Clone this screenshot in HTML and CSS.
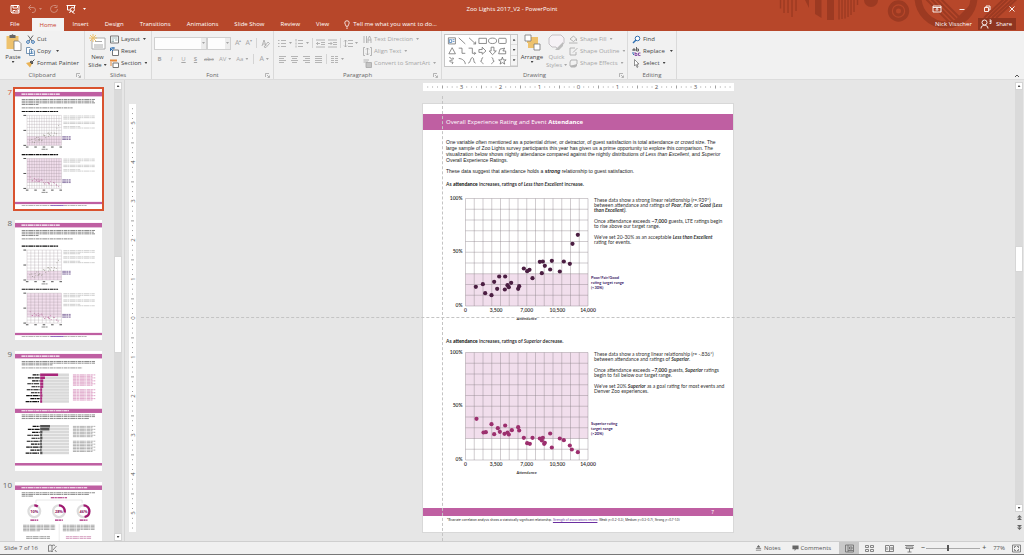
FILE: index.html
```html
<!DOCTYPE html>
<html lang="en">
<head>
<meta charset="utf-8">
<title>Zoo Lights 2017_V2 - PowerPoint</title>
<link rel="stylesheet" href="styles.css">
</head>
<body>
<header class="top">
  <svg class="pattern" viewBox="0 0 300 31" aria-hidden="true">
    <g stroke="#9c3a22" stroke-width="1.4" fill="none">
      <path d="M56.500 0V8.500M60 0V13M64 0V13M68 0V17M72 0V11"/>
      <path d="M115 0V19.500M118 0V19M121 0V18.500M124 0V17M127 0V15M130 0V12M133.500 0V5"/>
      <circle cx="174.500" cy="11" r="8.700" stroke-width="4"/><circle cx="174.500" cy="11" r="4" stroke-width="3"/>
      <circle cx="222" cy="-3" r="28" stroke-width="7"/>
      <path d="M199 -4L226 23M204 -4L229 21M209 -4L232 19M214 -4L235 17" stroke-width="2"/>
      <path d="M229 24L247 6" stroke-width="3"/>
      <path d="M260 18L281 -2M264 18L285 -2M268 18L290 -2M272 18L296 -4" stroke-width="2"/>
    </g>
    <g fill="#9c3a22"><path d="M81 0H85V8ZM91 0H97.500V18L91 14ZM103 0H110V20H103Z"/><circle cx="147" cy="0" r="7"/></g>
  </svg>
  <div class="titlebar">
    <div class="qat">
      <button aria-label="Save"><svg viewBox="0 0 10 10" class="i10"><path d="M1 1.500H9V9H2L1 8ZM3 1.500V4H7.500V1.500M3 9V6.500H5" fill="none" stroke="#fff"/><path d="M5 7H9M9 7L7.500 5.500" stroke="#fff"/></svg></button>
      <button class="dim" aria-label="Undo"><svg viewBox="0 0 10 10" class="i10"><path d="M4 1L1.500 3.500L4 6M1.500 3.500H6A2.500 2.500 0 0 1 6 8.500H5" fill="none" stroke="currentColor"/></svg><i class="caret"></i></button>
      <button class="dim" aria-label="Redo"><svg viewBox="0 0 10 10" class="i10"><path d="M7 1.500H4.500A3.500 3.500 0 1 0 8.500 5M5.500 3.500H8V1" fill="none" stroke="currentColor"/></svg></button>
      <button aria-label="Start from beginning"><svg viewBox="0 0 10 10" class="i10"><path d="M.5 1.500H9.500M1.500 2V6H4M8.500 2V4M3.500 9L5 6.500" fill="none" stroke="#fff"/><circle cx="6.500" cy="5.500" r="2" fill="none" stroke="#fff"/><path d="M6 8L8.500 9.500" stroke="#fff"/></svg></button>
      <button aria-label="Customize toolbar"><i class="caret"></i></button>
    </div>
    <div class="title">Zoo Lights 2017_V2 - PowerPoint</div>
    <div class="winbtns">
      <button aria-label="Ribbon display"><svg viewBox="0 0 10 8" class="w"><path d="M1 1H9V7H1ZM1 2.500H9M5 6V3.500M3.500 4.800L5 3.500L6.500 4.800" /></svg></button>
      <button aria-label="Minimize"><svg viewBox="0 0 10 8" class="w"><path d="M2.500 4.500H7.500"/></svg></button>
      <button aria-label="Restore"><svg viewBox="0 0 10 8" class="w"><path d="M2.500 2.500H6.500V6.500H2.500ZM4 2V1H8V5H7"/></svg></button>
      <button aria-label="Close"><svg viewBox="0 0 10 8" class="w"><path d="M2.500 1.500L7.500 6.500M7.500 1.500L2.500 6.500"/></svg></button>
    </div>
  </div>
  <nav class="tabs">
    <button class="file">File</button><button class="on">Home</button><button>Insert</button><button>Design</button><button>Transitions</button><button>Animations</button><button>Slide Show</button><button>Review</button><button>View</button>
    <button class="tell"><svg viewBox="0 0 8 10" class="bulb"><path d="M3 7C3 5.500 1.500 5 1.500 3.300A2.500 2.500 0 0 1 6.500 3.300C6.500 5 5 5.500 5 7ZM3 9H5" fill="none" stroke="#fff" stroke-width=".9"/></svg>Tell me what you want to do...</button>
    <span class="user">Nick Visscher</span>
    <button class="share"><svg viewBox="0 0 12 10" class="person"><circle cx="4.500" cy="3.500" r="2.500"/><path d="M1 9.500C1 7 3 6.300 4.500 6.300S8 7 8 9.500M9.500 1H11V4.500H9.500M9.500 2.700H11"/></svg>Share</button>
  </nav>
</header>

<section class="ribbon" aria-label="Home">
  <div class="group clip">
    <div class="body">
      <button class="big"><svg viewBox="0 0 16 17" class="bigi"><path d="M1 2H13V15H1Z" fill="#eec26d"/><path d="M4 1H6L7 0L8 1H10V4H4Z" fill="#666"/><path d="M8.500 7H13L15.500 9.500V16.500H8.500Z" fill="#fff" stroke="#777" stroke-width=".8"/></svg>Paste<i class="caret"></i></button>
      <div class="stack">
        <button><svg viewBox="0 0 9 9" class="i"><path d="M2 .5L6 6M7 .5L3 6" stroke="#666"/><g fill="none" stroke="#3e78b5"><circle cx="2" cy="7" r="1.400"/><circle cx="7" cy="7" r="1.400"/></g></svg>Cut</button>
        <button><svg viewBox="0 0 9 9" class="i"><path d="M.5.5H4L5.500 2V6.500H.5ZM3.500 2.500H7L8.500 4V8.500H3.500Z" fill="#fff" stroke="#557da5" stroke-width=".8"/><path d="M4.500 5H7.500M4.500 6.500H7.500" stroke="#3e78b5" stroke-width=".7"/></svg>Copy <i class="caret far"></i></button>
        <button><svg viewBox="0 0 9 9" class="i"><path d="M0 4L4 3L6 5L4 8.500Z" fill="#eab356"/><path d="M4 3L6 5L7 4L5.500 2ZM6 3L8.500.5" stroke="#555" fill="#666"/></svg>Format Painter</button>
      </div>
    </div>
    <div class="name">Clipboard<svg class="launch" viewBox="0 0 5 5"><path d="M.5 4V.5H4M2 2L4 4M4.500 2.500V4.500H2.500"/></svg></div>
  </div>
  <div class="group slides">
    <div class="body">
      <button class="big"><svg viewBox="0 0 17 17" class="bigi"><path d="M3 4H16V15H3Z" fill="#fff" stroke="#999" stroke-width=".8"/><path d="M6 7.500H13M5 11H14M5 13H14" stroke="#aaa"/><path d="M4 0V8M0 4H8M1 1L7 7M7 1L1 7" stroke="#eec26d"/></svg>New<span>Slide<i class="caret in"></i></span></button>
      <div class="stack">
        <button><svg viewBox="0 0 9 9" class="i"><path d="M.5 1H8.500V8H.5Z" fill="#fff" stroke="#777"/><path d="M1.500 3H7.500M1.500 5H4M5 5H7.500M1.500 6.500H4" stroke="#799" stroke-width=".7"/></svg>Layout<i class="caret in"></i></button>
        <button><svg viewBox="0 0 9 9" class="i"><path d="M2.500 3H8.500V8.500H2.500Z" fill="#fff" stroke="#777"/><path d="M.5 4V1H5M3 0V2.500M.5 1.500L3 4" fill="none" stroke="#2f6fb0"/></svg>Reset</button>
        <button><svg viewBox="0 0 9 9" class="i"><path d="M0 1.500H7" stroke="#e78a3c" stroke-width="2"/><path d="M3 4H8.500V8.500H3Z" fill="#fff" stroke="#777"/><path d="M1 3V7" stroke="#e78a3c"/></svg>Section<i class="caret in"></i></button>
      </div>
    </div>
    <div class="name">Slides</div>
  </div>
  <div class="group font off">
    <div class="rows">
      <div class="row">
        <span class="combo wide"><input aria-label="Font" disabled><i class="caret"></i></span><span class="combo"><input aria-label="Font size" disabled><i class="caret"></i></span>
        <button class="g">A<sup>▴</sup></button><button class="g">A<sup>▾</sup></button><span class="sep"></span><button class="g" aria-label="Clear formatting"><svg viewBox="0 0 9 9" class="i"><path d="M1 7L3 1L5 7M2 5H4M3 8L7 3L8.500 4.500L5 8.500Z" class="ln"/></svg></button>
      </div>
      <div class="row fmt">
        <button><b>B</b></button><button><em>I</em></button><button><u>U</u></button><button><b><u>S</u></b></button><button><s>abc</s></button><button>AV<i class="caret"></i></button><button>Aa<i class="caret"></i></button><span class="sep"></span><button class="g">A<i class="caret"></i></button>
      </div>
    </div>
    <div class="name">Font<svg class="launch" viewBox="0 0 5 5"><path d="M.5 4V.5H4M2 2L4 4M4.500 2.500V4.500H2.500"/></svg></div>
  </div>
  <div class="group para off">
    <div class="body">
      <div class="rows">
        <div class="row">
          <button aria-label="Bullets"><svg viewBox="0 0 9 9" class="i"><path d="M0 1.500H1.500M3 1.500H8M0 4.500H1.500M3 4.500H8M0 7.500H1.500M3 7.500H8" class="ln"/></svg><i class="caret"></i></button>
          <button aria-label="Numbering"><svg viewBox="0 0 9 9" class="i"><path d="M1 0V2.500M3 1.500H8M1 3.500V5.500M3 4.500H8M1 6.500V8.500M3 7.500H8" class="ln"/></svg><i class="caret"></i></button><span class="sep"></span>
          <button aria-label="Decrease indent"><svg viewBox="0 0 9 9" class="i"><path d="M0 1H9M5 3.500H9M5 5.500H9M0 8H9M4 4.500H.5M2 3L.5 4.500L2 6" class="ln"/></svg></button>
          <button aria-label="Increase indent"><svg viewBox="0 0 9 9" class="i"><path d="M0 1H9M5 3.500H9M5 5.500H9M0 8H9M0 4.500H4M2.500 3L4 4.500L2.500 6" class="ln"/></svg></button><span class="sep"></span>
          <button aria-label="Line spacing"><svg viewBox="0 0 9 9" class="i"><path d="M4 1.500H9M4 4.500H9M4 7.500H9M1.500 1V8M0 2.500L1.500 1L3 2.500M0 6.500L1.500 8L3 6.500" class="ln"/></svg><i class="caret"></i></button>
        </div>
        <div class="row al">
          <button aria-label="Align left"><svg viewBox="0 0 9 9" class="i"><path d="M1 1.500H8M1 3.500H6M1 5.500H8M1 7.500H6" class="ln"/></svg></button>
          <button aria-label="Center"><svg viewBox="0 0 9 9" class="i"><path d="M1 1.500H8M2 3.500H7M1 5.500H8M2 7.500H7" class="ln"/></svg></button>
          <button aria-label="Align right"><svg viewBox="0 0 9 9" class="i"><path d="M1 1.500H8M3 3.500H8M1 5.500H8M3 7.500H8" class="ln"/></svg></button>
          <button aria-label="Justify"><svg viewBox="0 0 9 9" class="i"><path d="M1 1.500H8M1 3.500H8M1 5.500H8M1 7.500H8" class="ln"/></svg></button><span class="sep"></span>
          <button aria-label="Columns"><svg viewBox="0 0 9 9" class="i"><path d="M1 1.500H4M5 1.500H8M1 3.500H4M5 3.500H8M1 5.500H4M5 5.500H8M1 7.500H4M5 7.500H8" class="ln"/></svg><i class="caret"></i></button>
        </div>
      </div>
      <div class="stack">
        <button><svg viewBox="0 0 9 9" class="i"><path d="M1 1V8M3.500 1V8M5 8V4L6.500 1L8 4V8M5 5H8" class="ln"/></svg>Text Direction<i class="caret in"></i></button>
        <button><svg viewBox="0 0 9 9" class="i"><path d="M2 .5H.5V8.500H2M7 .5H8.500V8.500H7M4.500 1V8M3 2.500L4.500 1L6 2.500M3 6.500L4.500 8L6 6.500" class="ln"/></svg>Align Text<i class="caret in"></i></button>
        <button><svg viewBox="0 0 9 9" class="i"><path d="M.5 1H6M.5 3H5" class="ln"/><path d="M3 3.500H8.500V8.500H3Z" fill="#c4c4c4"/><path d="M3 3.500H8.500V8.500H3Z" class="ln"/></svg>Convert to SmartArt<i class="caret in"></i></button>
      </div>
    </div>
    <div class="name">Paragraph<svg class="launch" viewBox="0 0 5 5"><path d="M.5 4V.5H4M2 2L4 4M4.500 2.500V4.500H2.500"/></svg></div>
  </div>
  <div class="group draw">
    <div class="body">
      <div class="gallery">
        <svg viewBox="0 0 66 33" class="shapes" aria-label="Shapes"><g fill="none" stroke="#6a6a6a" stroke-width=".8">
          <path d="M2 3H9.500V9.500H2Z"/><path d="M3 5H5.500V8H3ZM6.500 5H8.500M6.500 7H8.500" stroke="#3e78b5"/><path d="M13 3L20 9.500M24 3L31 9.500M31 7V9.500H28.500M34.500 3.500H42.500V9H34.500Z"/><ellipse cx="49" cy="6.200" rx="4.300" ry="2.900"/><rect x="55.500" y="3.500" width="8" height="5.500" rx="1"/>
          <path d="M2.500 20L6 13.500L9.500 20ZM13 14H16.500V19.500H20M23.500 14H27.500V19.500H31M29.500 18L31 19.500L29.500 21M34.500 15.500H38V13L42 17L38 20.500V18.500H34.500ZM47.500 13H50.500V17H53L49 21L45.500 17H47.500ZM62 14L57 15L55.500 20H63V17H60Z"/>
          <path d="M3 24C5 23 4 27 6 25S8 27 5 27S3 29 7 29L6 31M13 25C17 25 20 28 20 31M23 30C26 30 25 24 27.500 24S28 30 31 30M39 24Q37.500 24 37.500 26T36.500 27.500T37.500 29T39 31M48 24Q49.500 24 49.500 26T50.500 27.500T49.500 29T48 31M59.500 23.500L60.500 26.500H63.500L61.200 28.300L62 31L59.500 29.400L57 31L57.800 28.300L55.500 26.500H58.500Z"/></g></svg>
        <div class="spin"><button aria-label="Row up"><i class="caret up"></i></button><button aria-label="Row down"><i class="caret"></i></button><button aria-label="More shapes"><i class="caret"></i></button></div>
      </div>
      <button class="big arr"><svg viewBox="0 0 17 17" class="bigi"><path d="M3 3H14V14H3Z" fill="#eec26d"/><path d="M1 1H7V7H1ZM10 10H16V16H10Z" fill="#fff" stroke="#777" stroke-width=".8"/><path d="M8 1H14V7H8ZM2 9H8V15H2Z" fill="#f1f1f1"/><path d="M8 3H14V8H8ZM4 8H9V14H4Z" fill="#eec26d"/></svg>Arrange<i class="caret"></i></button>
      <button class="big off"><svg viewBox="0 0 17 17" class="bigi"><path d="M4 1H13L16 4V9L10 16L8 13H4L1 10V4Z" fill="#f6f2f6" stroke="#c4c0c4"/><path d="M7 16L15 8V12L11 16Z" fill="#bdbdbd"/></svg>Quick<span>Styles<i class="caret in"></i></span></button>
      <div class="stack off">
        <button><svg viewBox="0 0 9 9" class="i"><path d="M1 4L4.500 1L7.500 4L4.500 6.500ZM7.500 4V6M0 8H8.500" class="ln"/></svg>Shape Fill<i class="caret in"></i></button>
        <button><svg viewBox="0 0 9 9" class="i"><path d="M6 1H1V8H7V5M4 5.500L8.500 1" class="ln"/></svg>Shape Outline<i class="caret in"></i></button>
        <button><svg viewBox="0 0 9 9" class="i"><path d="M2 1H8V5L6 7H1V3Z" class="ln"/><path d="M1 7L8 5V7L6 8.500H2Z" fill="#b4b4b4"/></svg>Shape Effects<i class="caret in"></i></button>
      </div>
    </div>
    <div class="name">Drawing<svg class="launch" viewBox="0 0 5 5"><path d="M.5 4V.5H4M2 2L4 4M4.500 2.500V4.500H2.500"/></svg></div>
  </div>
  <div class="group edit">
    <div class="body"><div class="stack">
      <button><svg viewBox="0 0 9 9" class="i"><circle cx="5.500" cy="3.500" r="2.300" fill="#fff" stroke="#2f6fb0"/><path d="M4 5L1 8" stroke="#2f6fb0" stroke-width="1.500"/></svg>Find</button>
      <button><svg viewBox="0 0 9 9" class="i"><path d="M1 4V2H3V4M1 3H3M4.500 0V4H6.500V2H4.500" fill="none" stroke="#555" stroke-width=".9"/><path d="M3 5V8.500H5V6.500H3M8.500 6H6.500V8.500H8.500" fill="none" stroke="#8b55a8"/><path d="M1 5V7L2 8" fill="none" stroke="#2f6fb0"/></svg>Replace <i class="caret far"></i></button>
      <button><svg viewBox="0 0 9 9" class="i"><path d="M2.500.5V7L4 5.500L5 8.500L6 8L5 5H7Z" fill="#fff" stroke="#777" stroke-width=".8"/></svg>Select<i class="caret in"></i></button>
    </div></div>
    <div class="name">Editing</div>
  </div>
  <button class="collapse" aria-label="Collapse ribbon"><svg viewBox="0 0 6 4" class="chev"><path d="M1 3L3 1L5 3" fill="none" stroke="#555"/></svg></button>
</section>

<main class="work">
  <aside class="thumbs" id="thumbs" aria-label="Slides"></aside>
  <div class="scroll left"><button aria-label="Scroll up"><i class="caret up"></i></button><div class="track"><div class="thumb"></div></div><button aria-label="Scroll down"><i class="caret"></i></button></div>
  <div class="vrule"><svg id="vrule" viewBox="0 0 7 428" aria-hidden="true"></svg></div>
  <div class="canvas">
    <div class="hrule"><svg id="hrule" viewBox="0 0 311 8" aria-hidden="true"></svg></div>
    <article class="slide">
      <h1>Overall Experience Rating and Event <b>Attendance</b></h1>
      <p class="lead">One variable often mentioned as a potential driver, or detractor, of guest satisfaction is total attendance or crowd size. The<br>large sample of Zoo Lights survey participants this year has given us a prime opportunity to explore this comparison. The<br>visualization below shows nightly attendance compared against the nightly distributions of <em>Less than Excellent</em>, and <em>Superior</em><br>Overall Experience Ratings.</p>
      <p class="lead second">These data suggest that attendance holds a <b><em>strong</em></b> relationship to guest satisfaction.</p>
      <h2>As <b>attendance</b> increases, ratings of <em>Less than Excellent</em> increase.</h2>
      <div class="figure">
        <svg class="chart" id="chart1" viewBox="0 0 144 130"></svg>
        <div class="notes">
          <p>These data show a strong linear relationship (<em>r</em>=.939*)<br>between attendance and ratings of <b><em>Poor</em></b>, <b><em>Fair</em></b>, or <b><em>Good (Less<br>than Excellent)</em></b>.</p>
          <p>Once attendance exceeds <b>~7,000</b> guests, LTE ratings begin<br>to rise above our target range.</p>
          <p>We've set 20-30% as an acceptable <b><em>Less than Excellent</em></b><br>rating for events.</p>
          <strong class="target">Poor/Fair/Good<br>rating target range<br>(&lt;30%)</strong>
        </div>
      </div>
      <h2 class="next">As <b>attendance</b> increases, ratings of <em>Superior</em> decrease.</h2>
      <div class="figure lower">
        <svg class="chart" id="chart2" viewBox="0 0 144 130"></svg>
        <div class="notes">
          <p>These data show a strong linear relationship (<em>r</em>= -.836*)<br>between attendance and ratings of <b><em>Superior</em></b>.</p>
          <p>Once attendance exceeds <b>~7,000</b> guests, <b><em>Superior</em></b> ratings<br>begin to fall below our target range.</p>
          <p>We've set 20% <b><em>Superior</em></b> as a goal rating for most events and<br>Denver Zoo experiences.</p>
          <strong class="target">Superior rating<br>target range<br>(&gt;20%)</strong>
        </div>
      </div>
      <div class="footband">7</div>
      <p class="foot">*Bivariate correlation analysis shows a statistically significant relationship. <a href="#">Strength of associations review</a>: Weak (r=0.2-0.3), Medium (r=0.3-0.7), Strong (r=0.7-1.0)</p>
    </article>
    <div class="guide v"></div><div class="guide h"></div>
  </div>
  <div class="scroll right"><button aria-label="Scroll up"><i class="caret up"></i></button><div class="track"><div class="thumb"></div></div><button aria-label="Scroll down"><i class="caret"></i></button><button class="pg" aria-label="Previous slide"><svg viewBox="0 0 6 8" class="dbl"><path d="M0 4L3 1L6 4ZM0 7L3 4L6 7Z"/></svg></button><button class="pg" aria-label="Next slide"><svg viewBox="0 0 6 8" class="dbl"><path d="M0 1L3 4L6 1ZM0 4L3 7L6 4Z"/></svg></button></div>
</main>

<footer class="status">
  <span class="count">Slide 7 of 16</span>
  <svg viewBox="0 0 9 9" class="i"><path d="M4 1.500Q2 .5.500 1.500V7.500Q2 6.500 4 7.500ZM4 1.500Q6 .5 7 1.500M4 7.500L5 7M5 6L8.500 2M7 6L8.500 8" fill="none" stroke="#666" stroke-width=".8"/></svg>
  <button class="notesb"><svg viewBox="0 0 8 8" class="s"><path d="M1 4.500H7M1 6.500H7M4 1L5.500 3H2.500Z" stroke="#666" fill="#666" stroke-width=".8"/></svg>Notes</button>
  <button class="comm"><svg viewBox="0 0 8 8" class="s"><path d="M.5 1H7.500V5.500H4.500L3 7.500V5.500H.5Z" fill="#666"/></svg>Comments</button>
  <div class="views">
    <button class="on" aria-label="Normal"><svg viewBox="0 0 9 9" class="i"><path d="M.5 1H8.500V8H.5ZM3 1V8M4.500 3H7V5H4.500ZM3 6.500H8.500" class="dk"/></svg></button>
    <button aria-label="Slide sorter"><svg viewBox="0 0 9 9" class="i"><path d="M.5 1.500H3.500V3.500H.5ZM5.500 1.500H8.500V3.500H5.500ZM.5 5.500H3.500V7.500H.5ZM5.500 5.500H8.500V7.500H5.500Z" class="dk"/></svg></button>
    <button aria-label="Reading view"><svg viewBox="0 0 9 9" class="i"><path d="M.5 1.500H4L4.500 2L5 1.500H8.500V7.500H.5ZM4.500 2V7.500M2 3V6M6 3V6M7.200 3V6" class="dk"/></svg></button>
    <button aria-label="Slide show"><svg viewBox="0 0 9 9" class="i"><path d="M0 1.500H9M1 3H8V4.500H1ZM4.500 5V8M2.500 8H6.500" class="dk"/></svg></button>
  </div>
  <button class="pm" aria-label="Zoom out">−</button>
  <input type="range" min="10" max="400" value="168" aria-label="Zoom">
  <button class="pm" aria-label="Zoom in">+</button>
  <span class="pct">77%</span>
  <svg viewBox="0 0 9 9" class="i fit"><path d="M.5 1H8.500V8H.5ZM2.500 4V2.500H4M5 2.500H6.500V4M6.500 5V6.500H5M4 6.500H2.500V5" class="dk"/></svg>
</footer>
<script src="script.js"></script>
</body>
</html>
```

FILE: styles.css
```css
* { box-sizing: border-box; }
html, body { height: 100%; }
body { margin: 0; display: flex; flex-direction: column; font: 6px/8px "Open Sans", "Noto Sans", sans-serif; color: #444; background: #e6e6e6; overflow: hidden; }
button { font: inherit; color: inherit; background: none; border: 0; padding: 0; margin: 0; display: flex; align-items: center; white-space: nowrap; }
svg { display: block; overflow: visible; flex: none; }
.i { width: 9px; height: 9px; }
.i10 { width: 10px; height: 10px; }
.ln { fill: none; stroke: #a6a6a6; stroke-width: 0.8; }
.dk { fill: none; stroke: #6a6a6a; stroke-width: 0.8; }
.caret { display: inline-block; flex: none; width: 3px; height: 2px; background: currentColor; clip-path: polygon(0 0, 100% 0, 50% 100%); }
.caret.up { clip-path: polygon(0 100%, 100% 100%, 50% 0); }
.caret.in { margin-left: 2px; vertical-align: 1px; }
.caret.far { margin-left: 3px; }

.top { position: relative; background: #b7472a; color: #fff; flex: none; }
.pattern { position: absolute; right: 0; top: 0; width: 300px; height: 31px; overflow: hidden; }
.titlebar { position: relative; display: grid; grid-template-columns: 1fr auto 1fr; align-items: center; height: 18px; }
.qat { display: flex; align-items: center; padding-left: 10px; gap: 7px; }
.qat button { gap: 2px; }
.dim { color: #cf8a77; }
.winbtns { display: flex; justify-content: flex-end; gap: 15px; padding-right: 7px; }
.w { width: 10px; height: 8px; fill: none; stroke: #fff; stroke-width: 0.9; }
.tabs { position: relative; display: flex; height: 13px; align-items: stretch; padding-right: 8px; border-bottom: 1px solid #b7472a; }
.tabs button { padding: 0 8px; }
.tabs .file { padding: 0 12px 0 10px; }
.tabs .on { background: #f3f3f3; color: #c8452b; margin-bottom: -1px; }
.tabs .tell { padding-left: 6px; gap: 2px; }
.bulb { width: 8px; height: 9px; }
.user { margin-left: auto; display: flex; align-items: center; padding-right: 6px; }
.tabs .share { background: #8f3520; padding: 0 4px 0 2px; gap: 4px; }
.person { width: 12px; height: 10px; fill: none; stroke: #fff; stroke-width: 0.9; }

.ribbon { position: relative; display: flex; flex: none; height: 49px; background: #f1f1f1; border-bottom: 1px solid #dcdcdc; }
.group { position: relative; display: flex; flex-direction: column; justify-content: space-between; padding-top: 2px; border-right: 1px solid #dadada; }
.clip { width: 85px; }
.slides { width: 67px; }
.font { width: 122px; }
.para { width: 168px; }
.draw { width: 186px; }
.edit { width: 49px; }
.body { display: flex; align-items: flex-start; }
.name { text-align: center; color: #666; line-height: 7px; }
.launch { position: absolute; right: 3px; bottom: 1px; width: 5px; height: 5px; fill: none; stroke: #999; stroke-width: 0.7; }
.off { color: #a6a6a6; }
.big { flex-direction: column; line-height: 8px; padding-top: 1px; }
.bigi { width: 17px; height: 17px; margin-bottom: 2px; }
.clip .big { width: 26px; }
.slides .big { width: 25px; }
.stack { display: flex; flex-direction: column; }
.stack button { height: 12px; gap: 2px; }
.stack .caret.in { margin-left: 1px; }
.rows { padding-top: 2px; }
.row { display: flex; align-items: center; height: 16px; }
.font .rows { padding-left: 2px; }
.font .row { gap: 4px; }
.font .row.fmt { gap: 5px; padding-left: 2px; }
.fmt button { min-width: 7px; justify-content: center; }
.row button { gap: 2px; }
.combo { display: flex; align-items: center; width: 24px; height: 13px; background: #ececec; border: 1px solid #d0d0d0; margin-left: -4px; }
.combo.wide { width: 53px; margin-left: 0; }
.combo input { flex: 1; min-width: 0; height: 11px; border: 0; padding: 0; background: #fdfdfd; }
.combo .caret { margin: 0 1px; }
.g { font-size: 7px; }
.g sup { font-size: 4px; line-height: 4px; align-self: flex-start; margin-left: -2px; }
.sep { width: 1px; height: 10px; background: #d4d4d4; }
.para .rows { width: 88px; padding-left: 4px; }
.para .row { gap: 3px; }
.para .stack { padding-left: 1px; }
.gallery { display: flex; margin: 1px 0 0 2px; border: 1px solid #c6c6c6; background: #fff; height: 33px; width: 74px; }
.shapes { width: 65px; height: 31px; }
.spin { display: grid; flex: 1; background: #f4f4f4; border-left: 1px solid #ccc; }
.spin button { justify-content: center; border-bottom: 1px solid #ddd; }
.draw .arr { width: 28px; }
.draw .big + .big { width: 21px; }
.draw .stack { padding-left: 2px; }
.edit .stack { padding-left: 4px; }
.collapse { position: absolute; right: 4px; bottom: 1px; }
.chev { width: 6px; height: 4px; }

.work { display: flex; flex: 1; min-height: 0; background: #e6e6e6; }
.thumbs { width: 114px; overflow: hidden; padding: 7px 0 0 3px; flex: none; }
.item { display: flex; align-items: flex-start; justify-content: flex-end; padding-right: 10px; margin-bottom: 7px; }
.item .num { font-size: 8px; line-height: 9px; padding-right: 1px; color: #666; }
.item .mini { border: 2px solid transparent; }
.item svg { width: 87px; height: 120px; background: #fff; overflow: hidden; }
.item.sel .num { color: #d9532f; }
.item.sel .mini { border-color: #d9532f; }
.scroll { width: 9px; flex: none; display: flex; flex-direction: column; padding: 2px 1px 0 0; }
.scroll button { height: 8px; background: #fff; border: 1px solid #d4d4d4; justify-content: center; }
.track { flex: 1; background: #dadada; }
.thumb { background: #fff; border: 1px solid #d6d6d6; }
.left { border-right: 1px solid #d6d6d6; width: 11px; padding-right: 2px; }
.left .thumb { margin-top: 166px; height: 97px; }
.right { margin-left: auto; padding-bottom: 9px; }
.right .thumb { margin-top: 156px; height: 26px; }
.scroll .pg { background: none; border: 0; height: 10px; }
.dbl { width: 5px; height: 7px; fill: #666; }
.vrule { width: 7px; margin: 24px 0 0 4px; flex: none; }
.vrule svg { width: 7px; height: 428px; background: #fff; }
.canvas { position: relative; flex: 1; display: flex; flex-direction: column; align-items: center; padding: 3px 0 0 5px; }
.hrule svg { width: 311px; height: 8px; background: #fff; }
.slide { width: 312px; margin-top: 12px; padding: 10px 0 9px; background: #fff; border: 1px solid #d8d8d8; font: 5px/6px "Liberation Sans", Arial, sans-serif; color: #222; white-space: nowrap; }
.slide h1 { margin: 0; height: 16px; background: #bf5fa2; color: #fff; font: 400 6px/16px "Open Sans", sans-serif; padding-left: 23px; }
.slide h1 b { font-weight: 700; }
.slide p { margin: 0; }
.slide .lead { padding-left: 23px; margin-top: 9px; }
.slide .lead.second { margin-top: 5px; }
.slide h2 { margin: 7px 0 0 23px; font: 600 5px/7px Lato, sans-serif; }
.slide h2 b { font-weight: 900; }
.slide h2.next { margin-top: 14px; }
.figure { display: flex; margin: 6px 0 0 23px; }
.figure.lower { margin-top: 3px; }
.chart { width: 144px; height: 130px; }
.chart text { font: 600 5px Lato, sans-serif; fill: #222; }
.chart .axis { font-size: 4px; }
.notes { display: flex; flex-direction: column; padding: 4px 0 0 1px; font: 5px/5px Lato, sans-serif; color: #333; }
.slide .notes p { margin: 0 0 6px 3px; }
.target { margin: auto 0 34px; color: #3b1a66; font: 700 4px/5px Lato, sans-serif; }
.lower .target { margin-bottom: 42px; }
.footband { margin-top: 30px; height: 8px; background: #bf5fa2; color: #fff; text-align: right; padding-right: 19px; line-height: 8px; }
.slide .foot { font-family: Inter, sans-serif; font-size: 3px; padding-left: 24px; margin-top: 1px; }
.foot a { color: #6a2fa0; }
.guide { position: absolute; pointer-events: none; }
.guide.v { left: 306px; top: 16px; bottom: 0; border-left: 1px dashed #c4c4c4; }
.guide.h { top: 237px; left: 5px; right: 0; border-top: 1px dashed #c4c4c4; }

.status { flex: none; display: flex; align-items: center; height: 14px; background: #f0f0f0; border-top: 1px solid #cfcfcf; border-bottom: 1px solid #777; padding: 0 3px 0 4px; color: #555; }
.count { margin-right: 10px; }
.s { width: 7px; height: 8px; }
.notesb { margin-left: auto; gap: 2px; }
.comm { margin-left: 11px; gap: 2px; }
.views { display: flex; align-self: stretch; margin-left: 8px; }
.views button { width: 20px; justify-content: center; }
.views .on { background: #c8c8c8; }
.pm { font-size: 7px; margin: 0 1px 0 2px; font-weight: 600; }
input[type="range"] { appearance: none; width: 54px; height: 8px; margin: 0; background: linear-gradient(#aaa, #aaa) center / 100% 1px no-repeat; }
input[type="range"]::-webkit-slider-thumb { appearance: none; width: 2px; height: 6px; background: #555; }
.pct { margin-left: 6px; }
.fit { margin-left: 7px; }
```

FILE: script.js
```js
const PINK = '#bf5fa2';

// Dot positions as [x, y] in thirds of a plot pixel, from the plot's top left.
const less = [[31,265],[52,257],[59,284],[78,290],[86,250],[95,271],[101,234],[119,234],[118,273],[126,260],[130,266],[137,253],[161,263],[158,271],[175,210],[185,218],[192,214],[201,239],[223,190],[232,189],[229,224],[238,202],[259,187],[254,213],[283,219],[295,189],[313,196],[321,136],[337,109]];
const superior = [[33,199],[54,240],[61,239],[78,215],[86,245],[97,227],[103,238],[119,219],[117,244],[126,240],[130,246],[139,233],[158,224],[161,234],[175,256],[185,272],[193,274],[201,256],[223,258],[232,256],[229,264],[236,274],[238,271],[254,243],[259,285],[283,258],[295,263],[313,279],[319,291],[337,299]];

function grid(x, y, w, h, cols, rows, from, to, t = 0.8) {
  let d = '';
  for (let i = 0; i <= cols; i++) d += `M${x + w * i / cols} ${y}V${y + h}`;
  for (let i = 0; i <= rows; i++) d += `M${x} ${y + h * i / rows}H${x + w}`;
  return `<rect x="${x}" y="${y + h * from}" width="${w}" height="${h * (to - from)}" fill="#f1deec"/><path d="${d}" fill="none" stroke="#8a7f88" stroke-opacity=".5" stroke-width="${t}"/>`;
}

function dots(list, x, y, r, color) {
  return list.map(p => `<circle cx="${x + p[0] / 3}" cy="${y + p[1] / 3}" r="${r}" fill="${color}"/>`).join('');
}

function chart(id, list, from, to, color) {
  const x = 19.5, y = 4.5, w = 122.5, h = 107.5;
  let s = grid(x, y, w, h, 14, 10, from, to) + dots(list, x, y, 2.1, color);
  ['100%', '50%', '0%'].forEach((t, i) => { s += `<text x="${x - 3}" y="${y + 1 + h * i / 2}" text-anchor="end">${t}</text>`; });
  ['0', '3,500', '7,000', '10,500', '14,000'].forEach((t, i) => { s += `<text x="${x + w * i / 4}" y="${y + h + 6}" text-anchor="middle">${t}</text>`; });
  s += `<text class="axis" x="${x + w / 2}" y="${y + h + 14}" text-anchor="middle">Attendance</text>`;
  document.getElementById(id).innerHTML = s;
}
chart('chart1', less, 0.7, 1, '#4b1e42');
chart('chart2', superior, 0, 0.8, '#9c2f6e');

// Rulers: an inch is 39px, the origin sits in the middle.
let h = '', v = '';
for (let i = -31; i <= 31; i++) {
  const p = 155.500 + i * 4.875;
  if (i % 8) h += `<rect x="${p}" y="${i % 4 ? 3.5 : 2.5}" width=".8" height="${i % 4 ? 1 : 3}" fill="#888"/>`;
  else h += `<text x="${p}" y="6" text-anchor="middle" font-size="6" fill="#555">${Math.abs(i / 8)}</text>`;
}
for (let i = -43; i <= 43; i++) {
  const p = 214 + i * 4.875;
  if (i % 8) v += `<rect x="${i % 4 ? 3 : 2}" y="${p}" width="${i % 4 ? 1 : 3}" height=".8" fill="#888"/>`;
  else v += `<text transform="translate(5.5 ${p}) rotate(-90)" text-anchor="middle" font-size="6" fill="#555">${Math.abs(i / 8)}</text>`;
}
document.getElementById('hrule').innerHTML = h;
document.getElementById('vrule').innerHTML = v;

// Slide previews, drawn in slide units.
const band = (y, hh) => `<rect y="${y}" width="311" height="${hh}" fill="${PINK}"/>`;
const line = (x, y, w, c = '#777', t = 3) => `<path d="M${x} ${y}h${w}" stroke="${c}" stroke-width="${t}" stroke-dasharray="13 1.500 7 2 19 1.500 4 2"/>`;
const intro = () => band(10, 16) + line(23, 18, 137, '#fff', 4) + line(24, 37, 262) + line(24, 43, 258) + line(24, 49, 262) + line(24, 55, 60) + line(24, 67, 182);
const foot = () => band(403, 8) + line(24, 416, 232, '#777', 2) + `<path d="M128 416h46" stroke="#7d50c0" stroke-width="2.500"/>`;

function plots(cols, a, b, y1, y2) {
  let s = intro() + foot();
  [[y1, 0.7, 1, a, '#776'], [y2, 0, 0.8, b, '#b0508c']].forEach(([y, f, t, list, c]) => {
    s += line(24, y - 14, 130, '#111', 4) + grid(43, y, 123, 107, cols, 10, f, t, 1.6) + dots(list, 43, y, 1.6, c);
    for (let i = 0; i < 5; i++) s += line(39 + i * 30, y + 113, 9, '#333', 3);
    for (let i = 0; i < 3; i++) s += line(30, y + i * 53.500, 10, '#333', 3);
    s += line(95, y + 121, 22, '#333', 2);
    [2, 8, 13, 24, 29, 40, 45].forEach((d, i) => { s += line(173, y + d, i % 3 === 2 ? 60 : 112, '#aaa', 2); });
    s += [76, 81, 86].map(d => line(169, y + d, 30, '#3b1a66', 2)).join('');
  });
  return s;
}
function bars() {
  let s = band(10, 16) + line(23, 18, 136, '#fff', 4) + line(24, 37, 262) + line(24, 43, 262) + line(24, 49, 110) + line(24, 60, 216, '#888') + band(206, 15) + line(23, 213, 170, '#fff', 4) + line(24, 228, 262) + line(24, 234, 262) + line(24, 241, 240) + band(400, 9);
  [[80, '#a8257a', [64, 17, 11, 11, 11, 7, 7, 8, 7, 7], '#c45a9a'], [264, '#555', [35, 33, 8, 7, 8, 6, 6, 7, 5, 8], '#777']].forEach(([y, c, list, n]) => {
    list.forEach((w, i) => {
      const yy = y + i * 10.6;
      s += `<rect x="90" y="${yy}" width="103" height="9" fill="#d9d9d9"/><rect x="90" y="${yy}" width="${w}" height="9" fill="${c}"/>` + line(88 - 25 - (i * 17) % 32, yy + 5, 25 + (i * 17) % 32, '#111', 4);
      if (i % 5 !== 4) s += line(207, yy + 5, 80, n, 2) + line(207, yy + 10, 70, n, 2);
    });
  });
  return s;
}
function rings() {
  let s = band(12, 16) + line(23, 20, 235, '#fff', 4) + line(24, 38, 262) + line(24, 44, 240) + line(24, 50, 40) + line(128, 56, 58, '#a8257a', 4) + `<path d="M75 75V64H240V75" fill="none" stroke="#aaa"/>`;
  [[69, 10], [157, 28], [245, 46]].forEach(([x, p]) => {
    s += `<circle cx="${x}" cy="104" r="21" fill="none" stroke="#ddd" stroke-width="8"/><circle cx="${x}" cy="104" r="21" fill="none" stroke="#a01870" stroke-width="8" pathLength="100" stroke-dasharray="${p} 100" transform="rotate(-90 ${x} 104)"/><text x="${x}" y="109" text-anchor="middle" font-size="14" font-weight="700" fill="#8a1560">${p}%</text>` + line(x - 14, 136, 28, '#a8257a', 4);
  });
  for (let i = 0; i < 5; i++) s += line(29, 154 + i * 5, i === 4 ? 60 : 115, '#666', 2) + line(171, 154 + i * 5, i === 4 ? 60 : 115, '#666', 2);
  s += `<path d="M158 150V215" stroke="#bbb"/>` + [195, 201].map(y => line(40, y, 85, '#555', 2) + line(182, y, 90, '#b0508c', 2)).join('');
  return s;
}
const pages = [[7, plots(14, less, superior, 94, 248)], [8, plots(9, less, superior, 107, 261)], [9, bars()], [10, rings()]];
document.getElementById('thumbs').innerHTML = pages.map(([n, art]) =>
  `<div class="item${n === 7 ? ' sel' : ''}"><span class="num">${n}</span><div class="mini"><svg viewBox="0 0 311 428" aria-label="Slide ${n}">${art}</svg></div></div>`).join('');
```
